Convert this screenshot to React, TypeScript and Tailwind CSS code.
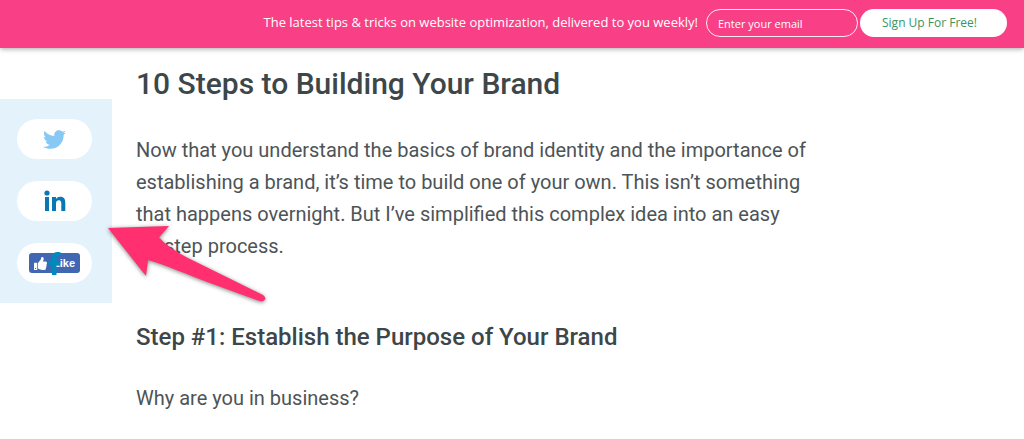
import { FaFacebookF, FaLinkedinIn, FaThumbsUp, FaTwitter } from "react-icons/fa";

function SignupBar() {
  return (
    <header className="flex h-12 items-start justify-end bg-[#f93f86] pt-[9px] pr-[17px] font-['Open_Sans',sans-serif] text-white shadow-[0_1px_5px_rgba(0,0,0,0.35)]">
      <form className="flex items-center" onSubmit={(e) => e.preventDefault()}>
        <label htmlFor="email" className="mr-2 text-[13px] whitespace-nowrap">
          The latest tips &amp; tricks on website optimization, delivered to you weekly!
        </label>
        <input
          id="email"
          type="email"
          placeholder="Enter your email"
          className="h-7 w-[152px] rounded-full border border-white/90 bg-transparent px-[11px] text-[11px] outline-none placeholder:text-white"
        />
        <button
          type="submit"
          className="ml-0.5 h-7 w-[147px] rounded-full bg-white pr-2 text-xs text-[#3a945f]"
        >
          Sign Up For Free!
        </button>
      </form>
    </header>
  );
}

function ShareRail() {
  const pill = "relative flex h-10 w-[75px] items-center justify-center rounded-full bg-white";
  return (
    <aside className="mt-[51px] flex w-28 shrink-0 flex-col gap-[22px] self-start bg-[#e4f2fc] pt-5 pb-5 pl-[17px]">
      <button type="button" aria-label="Share on Twitter" className={pill}>
        <FaTwitter size={23} color="#87c8f5" />
      </button>
      <button type="button" aria-label="Share on LinkedIn" className={pill}>
        <svg viewBox="0 0 22 22" className="h-[22px] w-[22px]" fill="#0878b5" aria-hidden="true">
          <circle cx="3" cy="3" r="2.6" />
          <path d="M1 7H5V21H1Z M8 7H12V9C13 7.400 14.500 6.700 16.300 6.700C20 6.700 21.300 9 21.300 12.700V21H17.300V13.500C17.300 11.500 16.700 10.200 14.900 10.200C12.800 10.200 12 11.700 12 13.700V21H8Z" />
        </svg>
      </button>
      <button type="button" aria-label="Like on Facebook" className={pill}>
        <span className="flex h-5 w-[51px] items-center justify-between rounded-[3px] bg-[#4267b2] px-[5px] font-['Liberation_Sans',sans-serif] text-[11px] font-bold text-white">
          <FaThumbsUp size={13} />
          Like
        </span>
        <FaFacebookF size={23} color="#0089bd" className="absolute" />
      </button>
    </aside>
  );
}

export default function App() {
  return (
    <div className="relative bg-white font-['Roboto',sans-serif] text-[#4d5457]">
      <SignupBar />
      <div className="flex">
        <ShareRail />
        <article className="ml-6 max-w-[690px] pt-4 text-xl leading-8">
          <h2 className="text-3xl leading-10 font-medium text-[#3d4649]">
            10 Steps to Building Your Brand
          </h2>
          <p className="mt-[30px]">
            Now that you understand the basics of brand identity and the importance of
            <br />
            establishing a brand, it’s time to build one of your own. This isn’t something
            <br />
            that happens overnight. But I’ve simplified this complex idea into an easy
            <br />
            10-step process.
          </p>
          <h3 className="mt-[59px] text-2xl leading-8 font-medium text-[#3d4649]">
            Step #1: Establish the Purpose of Your Brand
          </h3>
          <p className="mt-[29px]">Why are you in business?</p>
        </article>
      </div>
      <svg
        aria-hidden="true"
        viewBox="0 0 170 90"
        className="pointer-events-none absolute top-[220px] left-[102px] h-[90px] w-[170px] drop-shadow-[0_1px_2px_rgba(0,0,0,0.5)]"
      >
        <path
          d="M6 8 L67 6 L57 17.500 C65 26 75 32 86 38 L161 75 Q165 78 162 80.500 Q160 82 156 80.500 L108 63 C84 54 66 46 46 40 L44 56 Z"
          fill="#ff2f70"
        />
      </svg>
    </div>
  );
}
